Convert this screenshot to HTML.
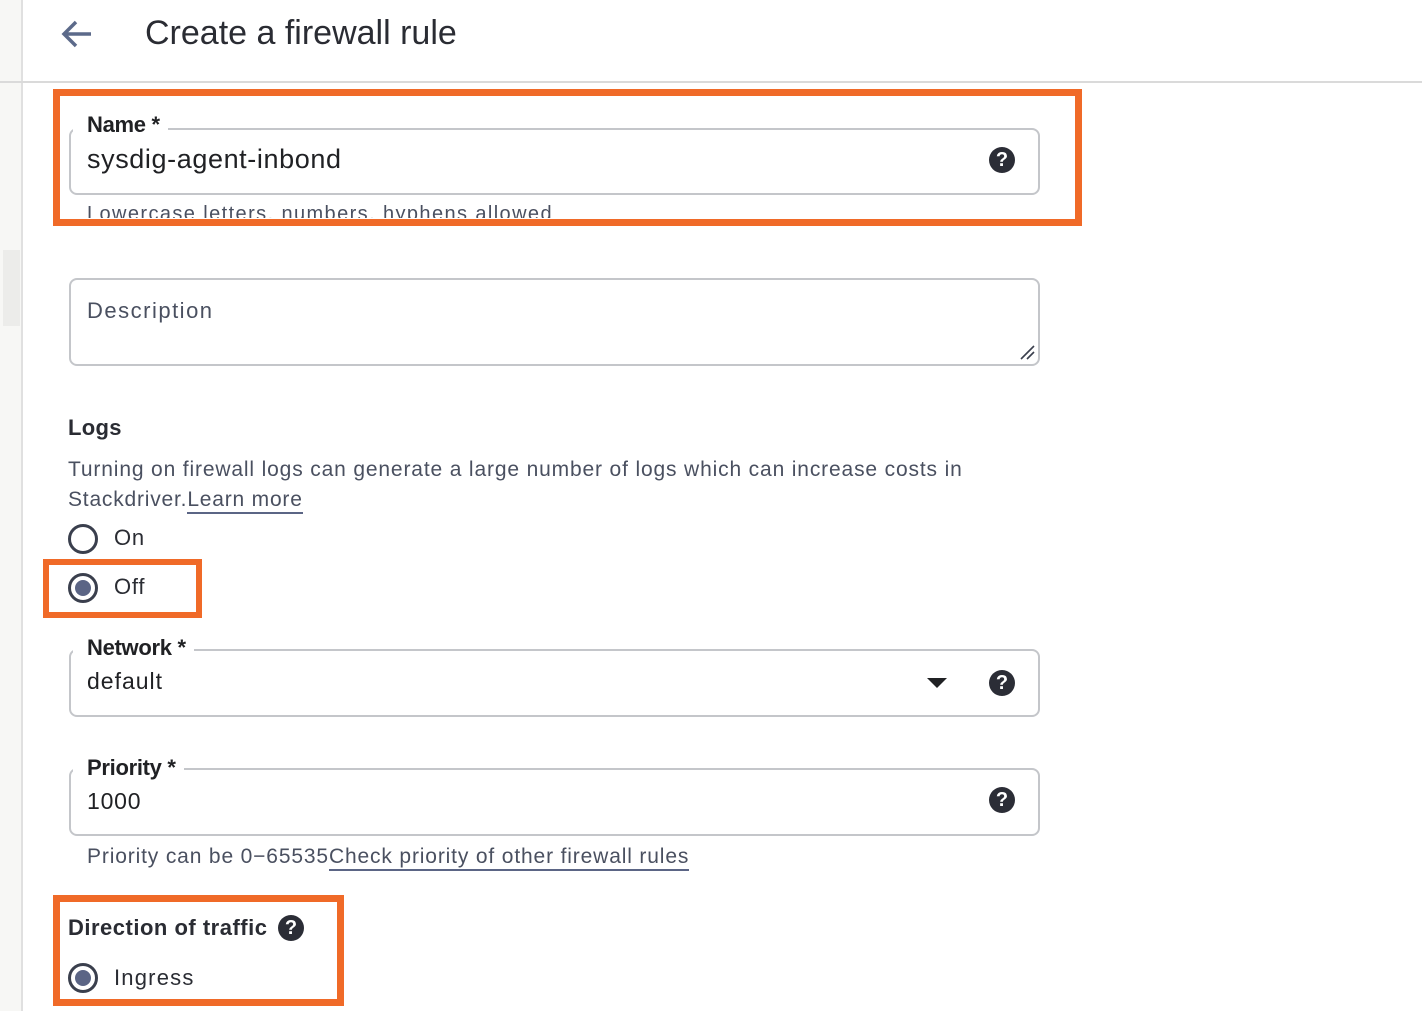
<!DOCTYPE html>
<html><head><meta charset="utf-8"><style>
*{margin:0;padding:0;box-sizing:border-box}
body{width:1425px;height:1011px;background:#fff;position:relative;overflow:hidden;font-family:"Liberation Sans",Arial,sans-serif;color:#202124}
.a{position:absolute;white-space:nowrap}
.field{position:absolute;left:69px;width:971px;border:2px solid #c4c6ca;border-radius:8px;background:#fff}
.lbl{position:absolute;background:#fff;padding:0 8px 0 14px;font-weight:bold;font-size:22px;color:#202124;letter-spacing:-0.3px}
.or{position:absolute;border:7px solid #f06a28}
.help{position:absolute;width:26px;height:26px;border-radius:50%;background:#2b2d36;color:#fff;font-weight:bold;font-size:20px;text-align:center;line-height:26px}
.radio{position:absolute;width:30px;height:30px;border-radius:50%;border:3px solid #3a3f4d}
.radio.on::after{content:"";position:absolute;left:4px;top:4px;width:16px;height:16px;border-radius:50%;background:#5b6585}
.t{font-size:21px;color:#4a5060;letter-spacing:0.8px}
</style></head><body>
<div class="a" style="left:0;top:0;width:21px;height:1011px;background:#f7f7f5"></div>
<div class="a" style="left:3px;top:250px;width:17px;height:76px;background:#ececea"></div>
<div class="a" style="left:21px;top:0;width:2px;height:1011px;background:#e0e0e0"></div>
<div class="a" style="left:0;top:81px;width:1422px;height:2px;background:#dadada"></div>
<svg class="a" style="left:60px;top:18px" width="34" height="32" viewBox="0 0 34 32"><path d="M31 16H5M16 4L4 16l12 12" fill="none" stroke="#5c6a8a" stroke-width="3.5"/></svg>
<div class="a" style="left:145px;top:14px;font-size:34px;color:#2a2c33;letter-spacing:0px">Create a firewall rule</div>

<div class="field" style="top:128px;height:67px"></div>
<div class="lbl" style="left:73px;top:112px">Name *</div>
<div class="a" style="left:87px;top:144px;font-size:27px;color:#202124;letter-spacing:0.6px">sysdig-agent-inbond</div>
<div class="help" style="left:989px;top:147px">?</div>
<div class="a t" style="left:87px;top:203px;height:15px;overflow:hidden;font-size:20px;letter-spacing:1.4px">Lowercase letters, numbers, hyphens allowed</div>
<div class="or" style="left:53px;top:89px;width:1029px;height:137px"></div>

<div class="field" style="top:278px;height:88px"></div>
<div class="a t" style="left:87px;top:298px;font-size:22px;letter-spacing:1.5px">Description</div>
<svg class="a" style="left:1018px;top:343px" width="18" height="18"><path d="M3 16L16 3M9 16L16 9" stroke="#3a3f4d" stroke-width="1.6"/></svg>

<div class="a" style="left:68px;top:415px;font-size:22px;font-weight:bold;color:#2a2c33;letter-spacing:0.3px">Logs</div>
<div class="a t" style="left:68px;top:458px;letter-spacing:0.85px">Turning on firewall logs can generate a large number of logs which can increase costs in</div>
<div class="a t" style="left:68px;top:488px">Stackdriver.<span style="border-bottom:2px solid #5b6585;padding-bottom:1px">Learn more</span></div>
<div class="radio" style="left:68px;top:524px"></div>
<div class="a" style="left:114px;top:525px;font-size:22px;color:#2a2c33;letter-spacing:0.8px">On</div>
<div class="radio on" style="left:68px;top:573px"></div>
<div class="a" style="left:114px;top:574px;font-size:22px;color:#2a2c33;letter-spacing:0.8px">Off</div>
<div class="or" style="left:43px;top:559px;width:159px;height:59px;border-width:6px"></div>

<div class="field" style="top:649px;height:68px"></div>
<div class="lbl" style="left:73px;top:635px">Network *</div>
<div class="a" style="left:87px;top:668px;font-size:23px;letter-spacing:1px">default</div>
<svg class="a" style="left:926px;top:677px" width="22" height="12"><path d="M1 1h20L11 11z" fill="#202124"/></svg>
<div class="help" style="left:989px;top:670px">?</div>

<div class="field" style="top:768px;height:68px"></div>
<div class="lbl" style="left:73px;top:755px">Priority *</div>
<div class="a" style="left:87px;top:788px;font-size:23px;letter-spacing:0.8px">1000</div>
<div class="help" style="left:989px;top:787px">?</div>
<div class="a t" style="left:87px;top:845px;letter-spacing:0.85px">Priority can be 0−65535<span style="border-bottom:2px solid #5b6585;padding-bottom:1px">Check priority of other firewall rules</span></div>

<div class="a" style="left:68px;top:915px;font-size:22px;font-weight:bold;color:#2a2c33;letter-spacing:0.5px">Direction of traffic</div>
<div class="help" style="left:278px;top:915px">?</div>
<div class="radio on" style="left:68px;top:963px"></div>
<div class="a" style="left:114px;top:965px;font-size:22px;color:#2a2c33;letter-spacing:1.2px">Ingress</div>
<div class="or" style="left:53px;top:895px;width:291px;height:111px"></div>
</body></html>
